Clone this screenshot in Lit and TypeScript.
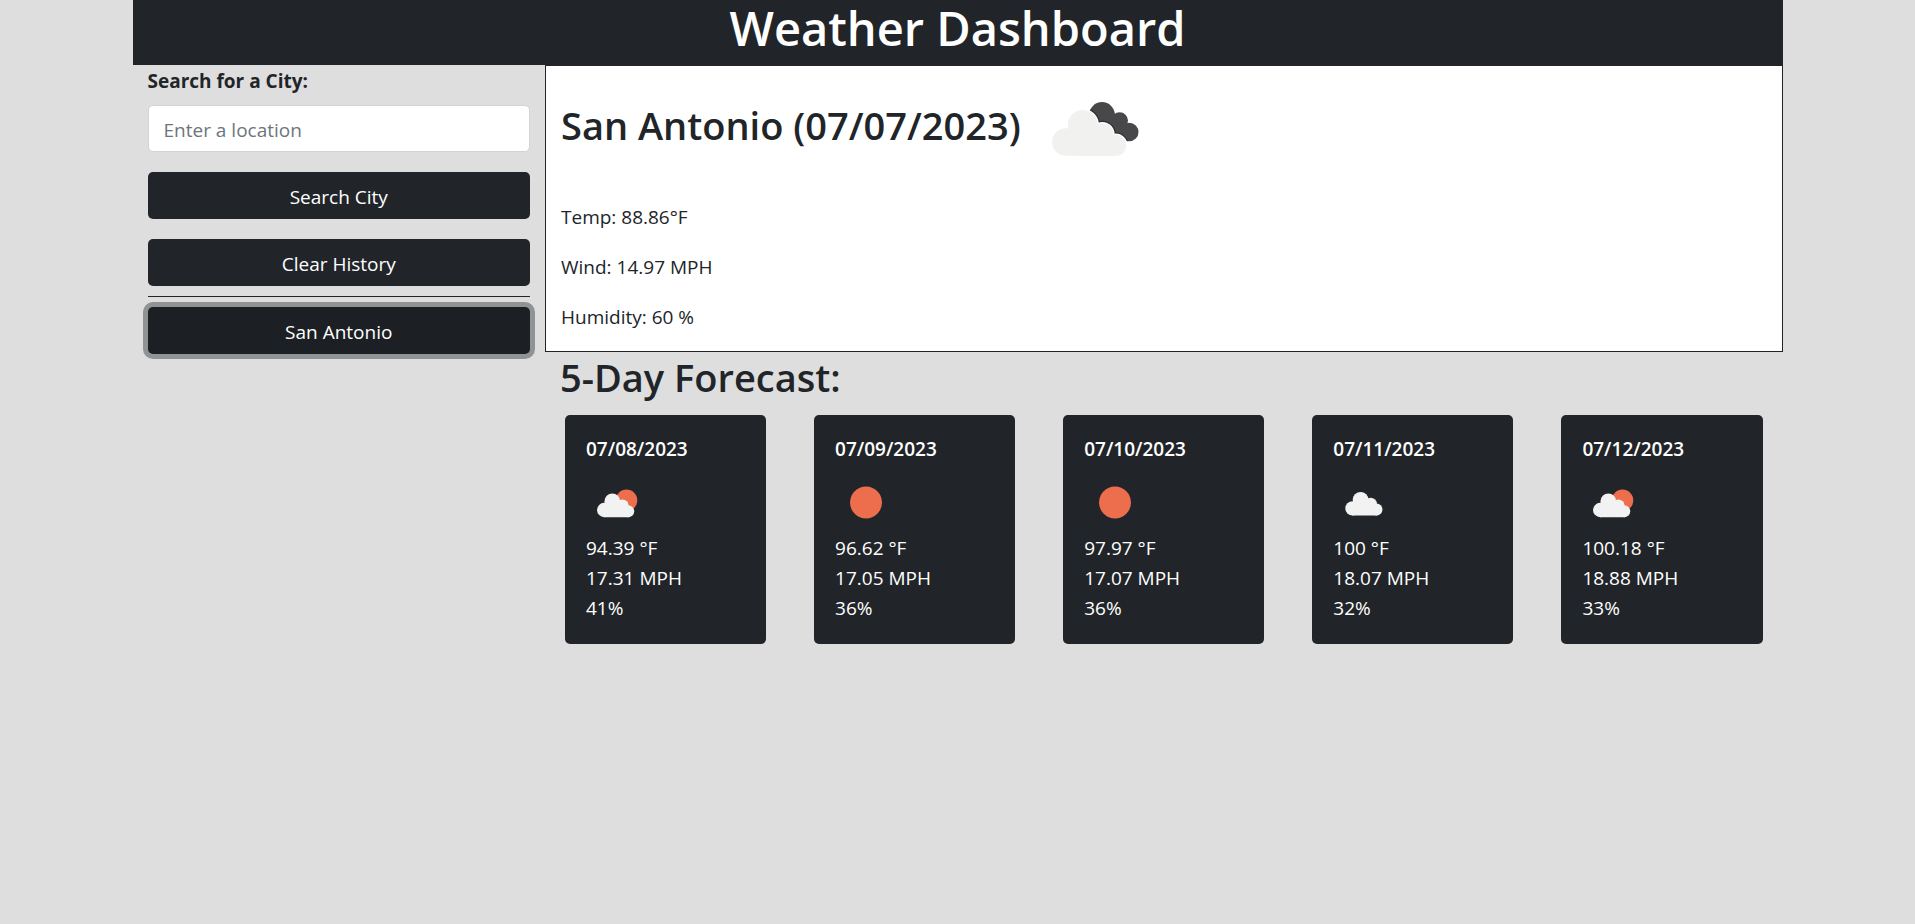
import { LitElement, html, css, svg } from "lit";
import { customElement, property, state } from "lit/decorators.js";

type Sky = "sun" | "few" | "cloud";

interface Day {
  date: string;
  sky: Sky;
  temp: string;
  wind: string;
  humidity: string;
}

const smallCloud = svg`
  <g class="cloud">
    <circle cx="18.2" cy="39" r="7.2" />
    <circle cx="26.3" cy="30.4" r="7.9" />
    <circle cx="36.4" cy="34.6" r="6.2" />
    <circle cx="42.2" cy="40.2" r="6" />
    <path d="M18 46.2V33L26 30L36 31L43 37V46.2Z" />
  </g>`;

@customElement("weather-icon")
export class WeatherIcon extends LitElement {
  @property() sky: Sky = "sun";

  static styles = css`
    :host { display: block; width: 62px; height: 62px; }
    .icon { display: block; width: 100%; height: 100%; }
    .cloud { fill: #f2f2f2; }
    .sun { fill: #ec6e4c; }
  `;

  render() {
    return html`<svg class="icon" viewBox="0 0 62 62" aria-hidden="true">
      ${this.sky === "sun" ? svg`<circle class="sun" cx="31" cy="31.5" r="16" />` : null}
      ${this.sky === "few"
        ? svg`<circle class="sun" cx="40.5" cy="29.3" r="10.8" />${smallCloud}`
        : null}
      ${this.sky === "cloud" ? svg`<g transform="translate(1.3 -1.6)">${smallCloud}</g>` : null}
    </svg>`;
  }
}

@customElement("broken-clouds")
export class BrokenClouds extends LitElement {
  static styles = css`
    :host { display: block; width: 125px; height: 125px; flex: none; }
    .icon { display: block; width: 100%; height: 100%; }
    .front { fill: #f1f1f0; }
    .back { fill: #48484a; }
    .shade { stroke: #303033; stroke-width: 5; fill: #303033; }
    .edge { stroke: #fff; stroke-width: 2.4; fill: #fff; }
  `;

  private lobes = svg`
    <circle cx="34.8" cy="76" r="13.8" />
    <circle cx="51.7" cy="59" r="15" />
    <circle cx="71.4" cy="68.2" r="11" />
    <circle cx="84.6" cy="79.4" r="10.6" />
    <path d="M34.8 89.8V70L52 60L71 68L84.6 78V90Z" />`;

  private rear = svg`
    <circle cx="71" cy="49" r="12.9" />
    <circle cx="88.6" cy="54.6" r="8.4" />
    <circle cx="98.2" cy="66" r="9.3" />
    <path d="M62 56L72 44L88 52L98 62L97 75L80 75Z" />`;

  render() {
    return html`<svg class="icon" viewBox="0 0 125 125" aria-hidden="true">
      <clipPath id="rear">${this.rear}</clipPath>
      <g class="back">${this.rear}</g>
      <g class="shade" clip-path="url(#rear)">${this.lobes}</g>
      <g class="edge">${this.lobes}</g>
      <g class="front">${this.lobes}</g>
    </svg>`;
  }
}

@customElement("forecast-card")
export class ForecastCard extends LitElement {
  @property({ attribute: false }) day!: Day;

  static styles = css`
    :host { display: block; padding: 21px; border-radius: 5px; background: #212529; color: #fff; }
    .date { margin: 0 0 9px; font-size: 19px; line-height: 26px; font-weight: 600; }
    .value { margin: 0; }
  `;

  render() {
    const d = this.day;
    return html`
      <h3 class="date">${d.date}</h3>
      <weather-icon .sky=${d.sky}></weather-icon>
      <p class="value">${d.temp} °F</p>
      <p class="value">${d.wind} MPH</p>
      <p class="value">${d.humidity}%</p>
    `;
  }
}

@customElement("app-root")
export class AppRoot extends LitElement {
  @state() private active = "San Antonio";

  private history = ["San Antonio"];

  private days: Day[] = [
    { date: "07/08/2023", sky: "few", temp: "94.39", wind: "17.31", humidity: "41" },
    { date: "07/09/2023", sky: "sun", temp: "96.62", wind: "17.05", humidity: "36" },
    { date: "07/10/2023", sky: "sun", temp: "97.97", wind: "17.07", humidity: "36" },
    { date: "07/11/2023", sky: "cloud", temp: "100", wind: "18.07", humidity: "32" },
    { date: "07/12/2023", sky: "few", temp: "100.18", wind: "18.88", humidity: "33" },
  ];

  static styles = css`
    :host {
      display: block;
      min-height: 100vh;
      background: #dedede;
      color: #212529;
      font-family: "Open Sans", "Noto Sans", sans-serif;
      font-size: 19px;
      line-height: 30px;
    }
    *, *::before { box-sizing: border-box; }
    .container { max-width: 1650px; margin: 0 auto; }
    .header { padding-bottom: 9px; background: #212529; color: #fff; text-align: center; }
    .title { margin: 0; font-size: 47px; line-height: 56px; font-weight: 600; }
    .layout { display: grid; grid-template-columns: 1fr 3fr; align-items: start; }
    .sidebar { padding: 0 15px; }
    .search { display: flex; flex-direction: column; }
    .label { padding-top: 1px; margin-bottom: 9px; font-weight: 700; }
    .field {
      width: 100%;
      height: 47px;
      margin-bottom: 20px;
      padding: 2px 15px 0;
      border: 1px solid #ced4da;
      border-radius: 5px;
      background: #fff;
      color: #212529;
      font: inherit;
    }
    .field::placeholder { color: #6c757d; opacity: 1; }
    .btn {
      display: block;
      width: 100%;
      height: 47px;
      padding: 2px 15px 0;
      border: 0;
      border-radius: 5px;
      background: #212529;
      color: #fff;
      font: inherit;
      cursor: pointer;
    }
    .search .btn { margin-bottom: 20px; }
    .btn.active { background: #1c1f23; box-shadow: 0 0 0 5px rgba(66, 70, 73, 0.5); }
    .rule { height: 1px; margin: 10px 0; border: 0; background: #212529; }
    .today { padding: 0 15px; border: 1px solid #212529; background: #fff; }
    .city { display: flex; align-items: center; gap: 10px; margin-bottom: 11px; }
    .heading { margin: 0; font-size: 38px; line-height: 48px; font-weight: 600; }
    .city .heading { padding-bottom: 8px; }
    .reading { margin: 0 0 20px; }
    .reading:last-child { margin-bottom: 19px; }
    .forecast-title { padding: 1px 15px 0; margin-bottom: 14px; }
    .cards { display: grid; grid-template-columns: repeat(5, 1fr); gap: 48px; padding: 0 20px; }
    @media (max-width: 1200px) {
      .layout { grid-template-columns: 1fr; }
      .cards { grid-template-columns: repeat(auto-fill, minmax(180px, 1fr)); gap: 20px; }
    }
  `;

  render() {
    return html`
      <div class="container">
        <header class="header"><h1 class="title">Weather Dashboard</h1></header>
        <div class="layout">
          <aside class="sidebar">
            <form class="search" @submit=${(e: Event) => e.preventDefault()}>
              <label class="label" for="city">Search for a City:</label>
              <input class="field" id="city" type="text" placeholder="Enter a location" />
              <button class="btn" type="submit">Search City</button>
            </form>
            <button class="btn" type="button">Clear History</button>
            <hr class="rule" />
            ${this.history.map(
              (name) => html`<button
                class="btn ${name === this.active ? "active" : ""}"
                type="button"
                @click=${() => (this.active = name)}
              >${name}</button>`
            )}
          </aside>
          <main>
            <section class="today">
              <div class="city">
                <h2 class="heading">San Antonio (07/07/2023)</h2>
                <broken-clouds></broken-clouds>
              </div>
              <p class="reading">Temp: 88.86°F</p>
              <p class="reading">Wind: 14.97 MPH</p>
              <p class="reading">Humidity: 60 %</p>
            </section>
            <section>
              <h2 class="heading forecast-title">5-Day Forecast:</h2>
              <div class="cards">
                ${this.days.map((d) => html`<forecast-card .day=${d}></forecast-card>`)}
              </div>
            </section>
          </main>
        </div>
      </div>
    `;
  }
}
